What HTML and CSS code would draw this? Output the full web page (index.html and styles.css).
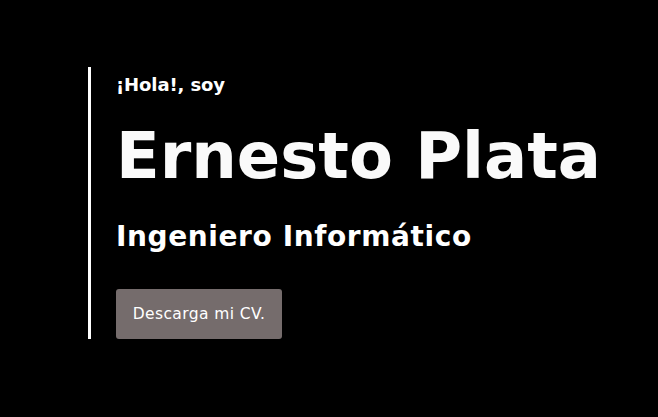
FILE: index.html
```html
<!DOCTYPE html>
<html lang="es">
<head>
<meta charset="utf-8">
<title>Ernesto Plata</title>
<link rel="stylesheet" href="styles.css">
</head>
<body>
<main class="page">
  <section class="hero">
    <p class="greeting">¡Hola!, soy</p>
    <h1 class="name">Ernesto Plata</h1>
    <h2 class="role">Ingeniero Informático</h2>
    <a class="cv-button" href="#">Descarga mi CV.</a>
  </section>
</main>
</body>
</html>
```
FILE: styles.css
```css
* { box-sizing: border-box; }
html, body { margin: 0; padding: 0; background: #000; }
body {
  font-family: "DejaVu Sans", "Liberation Sans", sans-serif;
  color: #fff;
  width: 658px;
  height: 417px;
  overflow: hidden;
}
.page {
  padding: 67px 0 0 88px;
}
.hero {
  display: flex;
  flex-direction: column;
  align-items: flex-start;
  border-left: 3px solid #fff;
  padding: 6px 0 0 25px;
}
.greeting {
  margin: 0;
  font-size: 18px;
  line-height: 24px;
  font-weight: 700;
  letter-spacing: -0.1px;
}
.name {
  margin: 23px 0 0;
  font-size: 64px;
  line-height: 72px;
  font-weight: 700;
  color: #fafafa;
  white-space: nowrap;
}
.role {
  margin: 29px 0 0;
  font-size: 28px;
  line-height: 32px;
  font-weight: 700;
  letter-spacing: 0.6px;
  white-space: nowrap;
}
.cv-button {
  margin-top: 36px;
  display: inline-flex;
  align-items: center;
  justify-content: center;
  width: 166px;
  height: 50px;
  background: #756c6c;
  border-radius: 3px;
  color: #fff;
  text-decoration: none;
  font-size: 15.5px;
  line-height: 20px;
  letter-spacing: 0.4px;
  white-space: nowrap;
}
```
